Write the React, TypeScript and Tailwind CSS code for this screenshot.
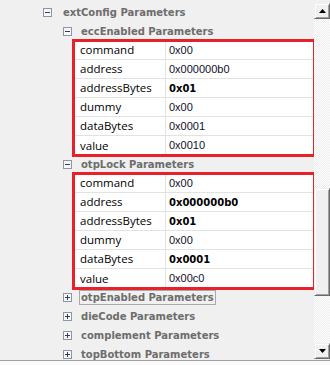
import type { ReactNode } from "react";

// Property grid with two highlighted parameter groups (red annotation boxes).

type Param = { name: string; value: string; bold?: boolean };

const ECC: Param[] = [
  { name: "command", value: "0x00" },
  { name: "address", value: "0x000000b0" },
  { name: "addressBytes", value: "0x01", bold: true },
  { name: "dummy", value: "0x00" },
  { name: "dataBytes", value: "0x0001" },
  { name: "value", value: "0x0010" },
];

const OTP_LOCK: Param[] = [
  { name: "command", value: "0x00" },
  { name: "address", value: "0x000000b0", bold: true },
  { name: "addressBytes", value: "0x01", bold: true },
  { name: "dummy", value: "0x00" },
  { name: "dataBytes", value: "0x0001", bold: true },
  { name: "value", value: "0x00c0" },
];

const TAHOMA = "font-['DejaVu_Sans',sans-serif]";

function Expander({ open }: { open: boolean }) {
  return (
    <svg width="9" height="9" viewBox="0 0 9 9" className="shrink-0">
      <rect x="0.5" y="0.5" width="8" height="8" fill="#f8f8f8" stroke="#8d95a6" />
      <line x1="2" y1="4.5" x2="7" y2="4.5" stroke="#2c3b68" />
      {!open && <line x1="4.5" y1="2" x2="4.5" y2="7" stroke="#2c3b68" />}
    </svg>
  );
}

function GroupRow({
  level,
  open,
  focused,
  children,
}: {
  level: 1 | 2;
  open: boolean;
  focused?: boolean;
  children: ReactNode;
}) {
  return (
    <div
      className={`flex h-[19px] items-center ${level === 1 ? "pl-[43px]" : "pl-[63px]"}`}
    >
      <Expander open={open} />
      <span
        className={`${TAHOMA} text-[10px] font-bold leading-[13px] text-[#6d6d6d] ${
          level === 1 ? "ml-[9px]" : "ml-[7px]"
        } ${focused ? "border border-[#a9a9a9] px-px" : "border border-transparent px-px"}`}
      >
        {children}
      </span>
    </div>
  );
}

function ParamTable({ rows }: { rows: Param[] }) {
  return (
    <div className="ml-[74px] w-[240px] bg-white outline-[3px] -outline-offset-1 outline-[#e8202a]">
      {rows.map((r, i) => (
        <div
          key={r.name}
          className={`flex h-[19px] items-center ${
            i < rows.length - 1 ? "border-b border-[#e2e2e2]" : ""
          }`}
        >
          <div className="flex h-full w-[92px] items-center border-r border-[#e2e2e2] pl-[6px] font-['Open_Sans',sans-serif] text-[11.5px] text-black">
            {r.name}
          </div>
          <div
            className={`pl-[3px] ${
              r.bold
                ? `${TAHOMA} text-[10px] font-bold text-black`
                : "font-['Liberation_Sans',sans-serif] text-[11px] text-[#10102a]"
            }`}
          >
            {r.value}
          </div>
        </div>
      ))}
    </div>
  );
}

function ArrowButton({ up }: { up: boolean }) {
  return (
    <div className="flex h-[16px] w-[16px] items-center justify-center border border-t-[#f0f0f0] border-l-[#f0f0f0] border-r-[#696969] border-b-[#696969] bg-[#f0f0f0] shadow-[inset_1px_1px_0_#ffffff,inset_-1px_-1px_0_#a0a0a0]">
      <svg width="7" height="4" viewBox="0 0 7 4">
        {up ? (
          <polygon points="3.5,0 7,4 0,4" fill="#000" />
        ) : (
          <polygon points="0,0 7,0 3.5,4" fill="#000" />
        )}
      </svg>
    </div>
  );
}

function Scrollbar() {
  return (
    <div className="flex w-[16px] shrink-0 flex-col pt-[3px] pb-px">
      <ArrowButton up />
      <div className="flex-1 bg-[repeating-conic-gradient(#ffffff_0_25%,#ececec_0_50%)] bg-[length:2px_2px]">
        <div className="mt-[169px] h-[108px] border border-t-[#f0f0f0] border-l-[#f0f0f0] border-r-[#696969] border-b-[#696969] bg-[#f0f0f0] shadow-[inset_1px_1px_0_#ffffff,inset_-1px_-1px_0_#a0a0a0]" />
      </div>
      <ArrowButton up={false} />
    </div>
  );
}

export default function App() {
  return (
    <div className="flex h-[365px] w-[330px] flex-col overflow-hidden bg-[#f0f0f0]">
      <div className="flex h-[360px] overflow-hidden">
        <div className="w-[314px] shrink-0 pt-[3px]">
          <GroupRow level={1} open>
            extConfig Parameters
          </GroupRow>
          <GroupRow level={2} open>
            eccEnabled Parameters
          </GroupRow>
          <ParamTable rows={ECC} />
          <GroupRow level={2} open>
            otpLock Parameters
          </GroupRow>
          <ParamTable rows={OTP_LOCK} />
          <GroupRow level={2} open={false} focused>
            otpEnabled Parameters
          </GroupRow>
          <GroupRow level={2} open={false}>
            dieCode Parameters
          </GroupRow>
          <GroupRow level={2} open={false}>
            complement Parameters
          </GroupRow>
          <GroupRow level={2} open={false}>
            topBottom Parameters
          </GroupRow>
        </div>
        <Scrollbar />
      </div>
      <div className="h-[5px] border-t border-[#a0a0a0] bg-[#fafafa]" />
    </div>
  );
}
